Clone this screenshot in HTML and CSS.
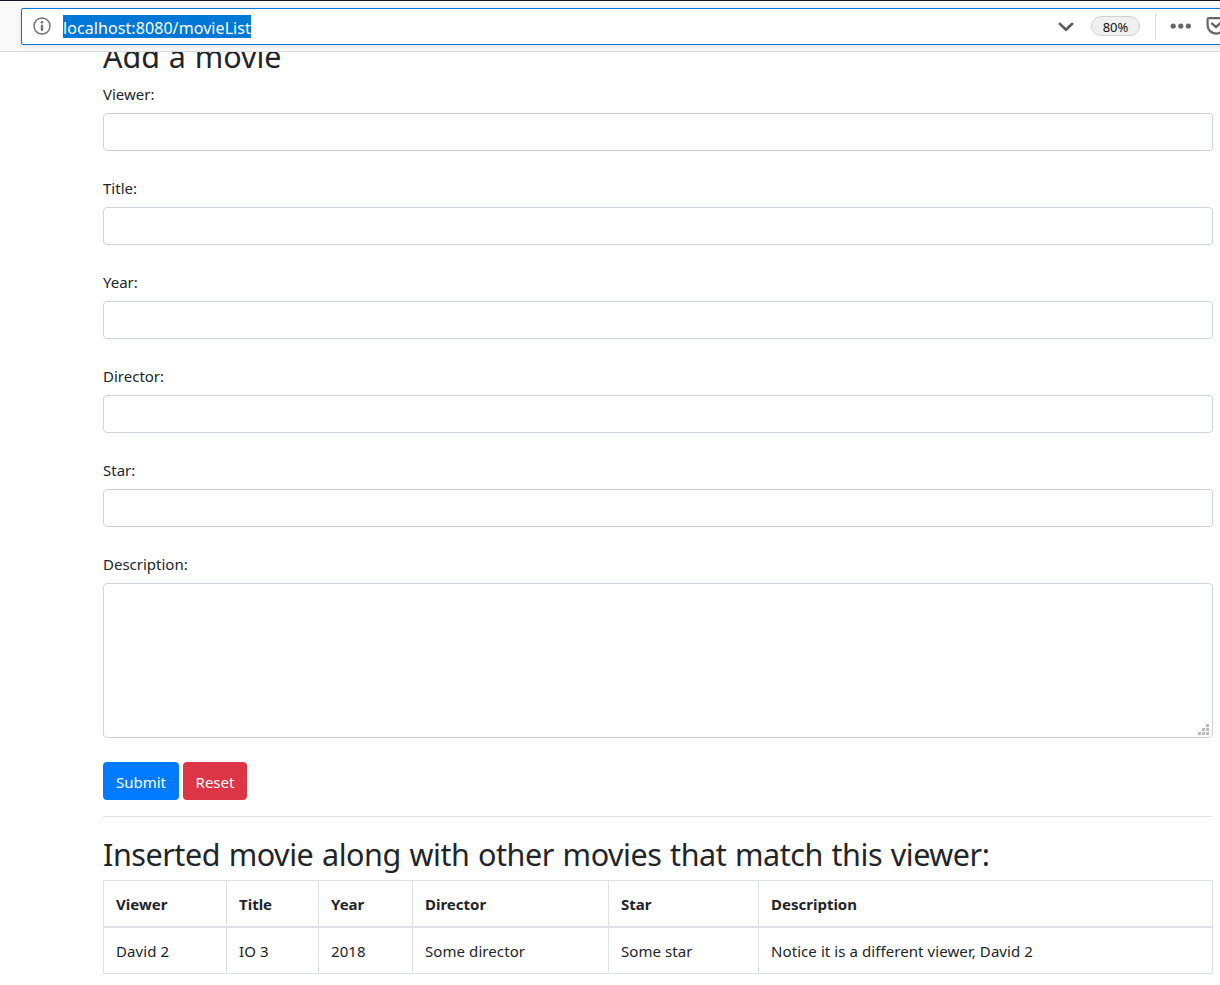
FILE: index.html
```html
<!DOCTYPE html>
<html lang="en">
<head>
<meta charset="utf-8">
<title>Movie list</title>
<link rel="stylesheet" href="styles.css">
</head>
<body>
<header class="toolbar">
  <div class="urlbar">
    <svg class="info" width="18" height="18" viewBox="0 0 18 18"><circle cx="9" cy="9" r="8" fill="none" stroke="#737373" stroke-width="1.5"/><circle cx="9" cy="5.2" r="1.3" fill="#737373"/><path d="M9 8.8v4" stroke="#737373" stroke-width="2.4" stroke-linecap="round"/></svg>
    <span class="address"><span class="selected">localhost:8080/movieList</span></span>
    <svg class="chevron" width="16" height="10" viewBox="0 0 16 10"><path d="M1.8 1.8L8 7.8l6.2-6" fill="none" stroke="#5e5e5f" stroke-width="2.6" stroke-linecap="round" stroke-linejoin="round"/></svg>
    <span class="zoom">80%</span>
    <span class="divider"></span>
    <svg class="dots" width="22" height="6" viewBox="0 0 22 6" fill="#666"><circle cx="3.2" cy="3" r="2.6"/><circle cx="10.8" cy="3" r="2.6"/><circle cx="18.4" cy="3" r="2.6"/></svg>
    <svg class="pocket" width="20" height="18" viewBox="0 0 20 18" fill="none" stroke="#666" stroke-linejoin="round" stroke-linecap="round"><path d="M2.6 1.2h14.8q1 0 1 1v6a8.4 8.4 0 0 1-16.8 0v-6q0-1 1-1z" stroke-width="2.2"/><path d="M6.2 6.6L10 10.2l3.8-3.6" stroke-width="2.4"/></svg>
  </div>
</header>
<main class="page">
  <h2 class="heading heading-add">Add a movie</h2>
  <form>
    <div class="field"><label for="viewer">Viewer:</label><input id="viewer" type="text"></div>
    <div class="field"><label for="title">Title:</label><input id="title" type="text"></div>
    <div class="field"><label for="year">Year:</label><input id="year" type="text"></div>
    <div class="field"><label for="director">Director:</label><input id="director" type="text"></div>
    <div class="field"><label for="star">Star:</label><input id="star" type="text"></div>
    <div class="field"><label for="description">Description:</label>
      <div class="area"><textarea id="description"></textarea>
        <svg class="grip" width="11" height="11" viewBox="0 0 11 11" fill="#bbb"><path d="M8 0h3v3H8zM4 4h3v3H4zM8 4h3v3H8zM0 8h3v3H0zM4 8h3v3H4zM8 8h3v3H8z"/></svg>
      </div>
    </div>
    <div class="actions"><button class="btn submit" type="submit">Submit</button><button class="btn reset" type="reset">Reset</button></div>
  </form>
  <hr>
  <h2 class="heading heading-list">Inserted movie along with other movies that match this viewer:</h2>
  <table>
    <colgroup><col class="c1"><col class="c2"><col class="c3"><col class="c4"><col class="c5"><col class="c6"></colgroup>
    <thead><tr><th>Viewer</th><th>Title</th><th>Year</th><th>Director</th><th>Star</th><th>Description</th></tr></thead>
    <tbody><tr><td>David 2</td><td>IO 3</td><td>2018</td><td>Some director</td><td>Some star</td><td>Notice it is a different viewer, David 2</td></tr></tbody>
  </table>
</main>
</body>
</html>
```

FILE: styles.css
```css
* { box-sizing: border-box; }

body {
  margin: 0;
  height: 985px;
  overflow: hidden;
  background: #fff;
  color: #212529;
  font: 400 15px/24px "Noto Sans", "Open Sans", sans-serif;
}

.toolbar {
  height: 52px;
  padding: 7px 0 0 21px;
  border-top: 1px solid #14142b;
  border-bottom: 1px solid #dcdcdd;
  background: #f9f9fa;
  overflow: hidden;
}

.urlbar {
  display: flex;
  align-items: center;
  width: 1220px;
  height: 37px;
  padding-left: 11px;
  border: 1px solid #0078d7;
  border-radius: 2px;
  background: #fff;
  box-shadow: 0 1px 6px rgba(0, 0, 0, .1);
}

.urlbar svg { flex: none; }
.info { margin-top: -1px; }
.address { display: flex; width: 995px; margin-left: 12px; height: 23px; white-space: nowrap; }
.selected {
  height: 23px;
  line-height: 26px;
  background: #0078d7;
  color: #fff;
  font-size: 16px;
  letter-spacing: .08px;
}
.chevron { margin-top: 1px; }
.zoom {
  width: 49px;
  height: 20px;
  margin: -2px 15px 0 17px;
  border: 1px solid #d0d0d0;
  border-radius: 10px;
  background: #f0f0f1;
  color: #111;
  font-size: 13px;
  line-height: 20px;
  text-align: center;
}
.divider { width: 1px; height: 26px; background: #dcdcdd; }
.dots { margin: -2px 0 0 14px; }
.pocket { margin: -2px 0 0 14px; }

.page { width: 1110px; margin-left: 103px; }

.heading {
  margin: 0;
  font-size: 30.5px;
  font-weight: 400;
  line-height: 38px;
  white-space: nowrap;
}
.heading-add {
  display: flex;
  align-items: flex-end;
  height: 23px;
  margin-bottom: 6px;
  overflow: hidden;
  line-height: 38px;
  letter-spacing: -.05px;
  word-spacing: 1px;
}

.field { margin-bottom: 24px; }
label { display: table; height: 24px; padding-top: 2px; margin-bottom: 8px; line-height: 22px; }
input, textarea {
  display: block;
  width: 100%;
  height: 38px;
  margin: 0;
  border: 1px solid #ced4da;
  border-radius: 4px;
  background: #fff;
}
.area { position: relative; }
textarea { height: 155px; resize: none; }
.grip { position: absolute; right: 4px; bottom: 3px; }

.actions { display: flex; gap: 4px; }
.btn {
  height: 38px;
  padding: 2px 0 0;
  border: 0;
  border-radius: 4px;
  color: #fff;
  font: inherit;
}
.submit { width: 76px; background: #007bff; }
.reset { width: 64px; background: #dc3545; }

hr { margin: 16px 0; border: 0; border-top: 1px solid #e5e5e5; }
.heading-list { height: 38px; margin-bottom: 9px; padding-top: 2px; letter-spacing: -.45px; word-spacing: 1.2px; }

table {
  width: 1110px;
  table-layout: fixed;
  border-collapse: collapse;
}
.c1 { width: 123px; }
.c2 { width: 92px; }
.c3 { width: 94px; }
.c4 { width: 196px; }
.c5 { width: 150px; }
th, td {
  height: 46px;
  padding: 2px 12px 0;
  border: 1px solid #dee2e6;
  text-align: left;
  white-space: nowrap;
}
th { border-bottom-width: 2px; font-weight: 700; }
td { height: 47px; letter-spacing: .08px; }
```
